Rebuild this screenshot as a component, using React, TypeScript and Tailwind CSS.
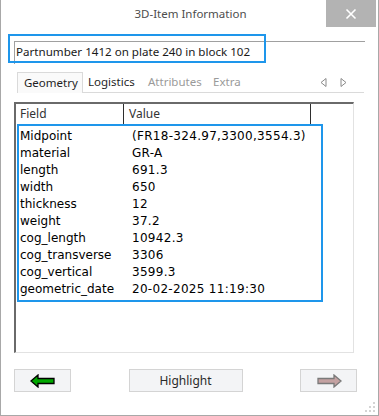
import React from "react";

const rows: [string, string][] = [
  ["Midpoint", "(FR18-324.97,3300,3554.3)"],
  ["material", "GR-A"],
  ["length", "691.3"],
  ["width", "650"],
  ["thickness", "12"],
  ["weight", "37.2"],
  ["cog_length", "10942.3"],
  ["cog_transverse", "3306"],
  ["cog_vertical", "3599.3"],
  ["geometric_date", "20-02-2025 11:19:30"],
];

function ArrowLeft() {
  return (
    <svg width="26" height="14" viewBox="0 0 26 14">
      <path d="M1 7 L8 1 L8 4.5 L24 4.5 L24 9.5 L8 9.5 L8 13 Z" fill="#00a800" stroke="#000" strokeWidth="1.3" strokeLinejoin="miter" />
    </svg>
  );
}

function ArrowRight() {
  return (
    <svg width="26" height="14" viewBox="0 0 26 14">
      <path d="M25 7 L18 1 L18 4.5 L2 4.5 L2 9.5 L18 9.5 L18 13 Z" fill="#c4a2a2" stroke="#7a7a7a" strokeWidth="1.3" />
    </svg>
  );
}

export default function App() {
  return (
    <div className="w-[379px] h-[416px] bg-white border-x border-b border-[#a8a8a8] relative flex flex-col font-['Noto_Sans',sans-serif] text-[#1a1a1a]">
      {/* title bar */}
      <div className="h-[27px] shrink-0 flex items-center justify-center relative">
        <span className="text-[11.5px] text-[#4d4d4d] pl-[2px]">3D-Item Information</span>
        <div className="absolute right-[2px] top-0 w-[50px] h-[27px] bg-[#b3b3b3] flex items-center justify-center">
          <svg width="12" height="12" viewBox="0 0 12 12">
            <path d="M1.5 1.5 L10.5 10.5 M10.5 1.5 L1.5 10.5" stroke="#fff" strokeWidth="1.6" />
          </svg>
        </div>
      </div>

      <div className="px-[13px] flex flex-col">
        {/* part number field */}
        <div className="relative mt-[14px] h-[23px] border-t border-l border-[#a0a0a0] flex items-center text-[11.6px] leading-none pl-[1px] pb-[3px]">
          Partnumber 1412 on plate 240 in block 102
          <div className="absolute left-[-7px] top-[-8px] w-[258px] h-[29px] border-2 border-[#1e96eb]" />
        </div>

        {/* tabs */}
        <div className="mt-[8px] h-[21px] flex items-stretch text-[11.5px]">
          <div className="ml-[3px] w-[66px] border-t border-l border-r border-[#dadada] bg-[#fafafa] flex items-center pl-[6px] text-[#1f1f1f]">
            Geometry
          </div>
          <div className="flex-1 border-b border-[#dadada] flex items-center relative">
            <span className="ml-[5px] w-[60px] text-[#1f1f1f]">Logistics</span>
            <span className="w-[65px] text-[#9a9a9a]">Attributes</span>
            <span className="text-[#9a9a9a]">Extra</span>
            <svg className="absolute left-[237px] top-[6px]" width="7" height="9" viewBox="0 0 7 9">
              <path d="M6 0.5 L6 8.5 L1 4.5 Z" fill="none" stroke="#8a8a8a" strokeWidth="1" />
            </svg>
            <svg className="absolute left-[257px] top-[6px]" width="7" height="9" viewBox="0 0 7 9">
              <path d="M1 0.5 L1 8.5 L6 4.5 Z" fill="none" stroke="#8a8a8a" strokeWidth="1" />
            </svg>
          </div>
          <div className="w-[1px]" />
        </div>

        {/* table */}
        <div className="mt-[9px] w-[340px] h-[251px] border-l-2 border-t-2 border-[#6a6a6a] border-r border-b border-r-[#e2e2e2] border-b-[#e2e2e2] flex flex-col">
          <div className="h-[20px] flex text-[12px] text-[#333] leading-none">
            <div className="w-[108px] border-r border-[#2e2e2e] flex items-center pl-[4px]">Field</div>
            <div className="w-[187px] border-r border-[#2e2e2e] flex items-center pl-[5px]">Value</div>
          </div>
          <div className="ml-[1px] w-[306px] h-[178px] border-2 border-[#1e96eb] pl-[1px] pt-[1px] font-['DejaVu_Sans',sans-serif] text-[12px] text-black">
            {rows.map(([k, v]) => (
              <div key={k} className="flex h-[17px] items-center whitespace-nowrap">
                <span className="w-[112px]">{k}</span>
                <span className="tracking-[0.3px]">{v}</span>
              </div>
            ))}
          </div>
        </div>

        {/* buttons */}
        <div className="mt-[16px] w-[343px] flex justify-between text-[12px]">
          <div className="w-[57px] h-[23px] bg-[#f3f4f6] border border-[#d4d4d4] flex items-center justify-center">
            <ArrowLeft />
          </div>
          <div className="w-[114px] h-[23px] bg-[#f3f4f6] border border-[#d4d4d4] flex items-center justify-center text-[#2a2a2a]">
            Highlight
          </div>
          <div className="w-[57px] h-[23px] bg-[#f3f4f6] border border-[#d4d4d4] flex items-center justify-center">
            <ArrowRight />
          </div>
        </div>
      </div>

      {/* resize grip */}
      <svg className="absolute right-[2px] bottom-[2px]" width="11" height="11" viewBox="0 0 11 11">
        <rect x="8" y="0" width="2" height="2" fill="#d4d4d4" />
        <rect x="4" y="4" width="2" height="2" fill="#d4d4d4" />
        <rect x="8" y="4" width="2" height="2" fill="#d4d4d4" />
        <rect x="0" y="8" width="2" height="2" fill="#d4d4d4" />
        <rect x="4" y="8" width="2" height="2" fill="#d4d4d4" />
        <rect x="8" y="8" width="2" height="2" fill="#d4d4d4" />
      </svg>
    </div>
  );
}
